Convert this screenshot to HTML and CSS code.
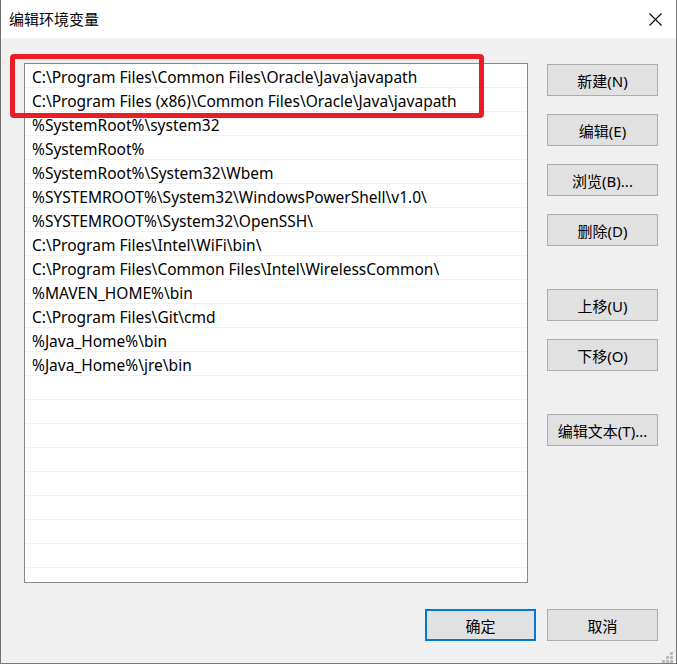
FILE: index.html
```html
<!DOCTYPE html>
<html lang="zh-CN">
<head>
<meta charset="utf-8">
<title>编辑环境变量</title>
<link rel="stylesheet" href="styles.css">
</head>
<body>
<div class="window">
  <div class="titlebar">
    <span class="title">编辑环境变量</span>
    <svg class="close" width="13" height="13" viewBox="0 0 13 13"><path d="M0.5 0.5 L12.5 12.5 M12.5 0.5 L0.5 12.5" stroke="#000" stroke-width="1.1" fill="none"/></svg>
  </div>
  <div class="client">
    <div class="main">
      <div class="listbox">
        <div class="row">C:\Program Files\Common Files\Oracle\Java\javapath</div>
        <div class="row">C:\Program Files (x86)\Common Files\Oracle\Java\javapath</div>
        <div class="row">%SystemRoot%\system32</div>
        <div class="row">%SystemRoot%</div>
        <div class="row">%SystemRoot%\System32\Wbem</div>
        <div class="row">%SYSTEMROOT%\System32\WindowsPowerShell\v1.0\</div>
        <div class="row">%SYSTEMROOT%\System32\OpenSSH\</div>
        <div class="row">C:\Program Files\Intel\WiFi\bin\</div>
        <div class="row">C:\Program Files\Common Files\Intel\WirelessCommon\</div>
        <div class="row">%MAVEN_HOME%\bin</div>
        <div class="row">C:\Program Files\Git\cmd</div>
        <div class="row">%Java_Home%\bin</div>
        <div class="row">%Java_Home%\jre\bin</div>
        <div class="row"></div>
        <div class="row"></div>
        <div class="row"></div>
        <div class="row"></div>
        <div class="row"></div>
        <div class="row"></div>
        <div class="row"></div>
        <div class="row"></div>
        <div class="row"></div>
      </div>
      <div class="buttons">
        <button class="btn">新建(N)</button>
        <button class="btn">编辑(E)</button>
        <button class="btn">浏览(B)...</button>
        <button class="btn">删除(D)</button>
        <button class="btn btn-sep">上移(U)</button>
        <button class="btn">下移(O)</button>
        <button class="btn btn-sep">编辑文本(T)...</button>
      </div>
    </div>
    <div class="footer">
      <button class="btn btn-default">确定</button>
      <button class="btn">取消</button>
    </div>
    <div class="highlight"></div>
    <div class="grip">
      <span class="dot d1"></span>
      <span class="dot d2"></span><span class="dot d3"></span>
      <span class="dot d4"></span><span class="dot d5"></span><span class="dot d6"></span>
    </div>
  </div>
</div>
</body>
</html>
```

FILE: styles.css
```css
* { box-sizing: border-box; }
html, body { margin: 0; padding: 0; background: #f0f0f0; }
body {
  font-family: "Noto Sans", "Noto Sans CJK SC", sans-serif;
  color: #000;
}
.window {
  width: 677px;
  height: 664px;
  display: flex;
  flex-direction: column;
  border-left: 1px solid #707070;
  border-right: 1px solid #7a7a7a;
  border-bottom: 1px solid #7a7a7a;
  background: #f0f0f0;
}
.titlebar {
  height: 38px;
  flex: none;
  background: #fff;
  display: flex;
  align-items: center;
  justify-content: space-between;
  padding: 0 14px 0 8px;
}
.title {
  font-family: "Noto Sans CJK SC", sans-serif;
  font-size: 15px;
  line-height: 20px;
}
.close { display: block; margin-top: 1px; }
.client {
  flex: 1;
  position: relative;
  padding: 25px 18px 0 23px;
  display: flex;
  flex-direction: column;
}
.main {
  display: flex;
  gap: 19px;
}
.listbox {
  width: 504px;
  height: 520px;
  border: 1px solid #828790;
  background: #fff;
  overflow: hidden;
}
.row {
  height: 24px;
  border-bottom: 1px solid #f0f0f0;
  padding: 3px 0 0 7px;
  font-size: 15.5px;
  line-height: 21px;
  white-space: nowrap;
}
.buttons {
  display: flex;
  flex-direction: column;
  gap: 18px;
  padding-top: 1px;
}
.btn {
  width: 111px;
  height: 32px;
  background: #e1e1e1;
  border: 1px solid #adadad;
  font-family: "Noto Sans", "Noto Sans CJK SC", sans-serif;
  font-size: 15px;
  color: #000;
  padding: 0;
  margin: 0;
}
.btn-sep { margin-top: 25px; }
.footer {
  display: flex;
  justify-content: flex-end;
  gap: 11px;
  margin-top: 26px;
}
.btn-default { border: 2px solid #0078d7; }
.highlight {
  position: absolute;
  left: 9px;
  top: 16px;
  width: 474px;
  height: 64px;
  border: 5px solid #ed1c24;
  border-radius: 4px;
}
.grip {
  position: absolute;
  right: 3px;
  bottom: 0px;
  width: 11px;
  height: 11px;
}
.dot {
  position: absolute;
  width: 3px;
  height: 3px;
  background: #bcbcbc;
}
.d1 { left: 8px; top: 0; }
.d2 { left: 4px; top: 4px; }
.d3 { left: 8px; top: 4px; }
.d4 { left: 0; top: 8px; }
.d5 { left: 4px; top: 8px; }
.d6 { left: 8px; top: 8px; }
```
